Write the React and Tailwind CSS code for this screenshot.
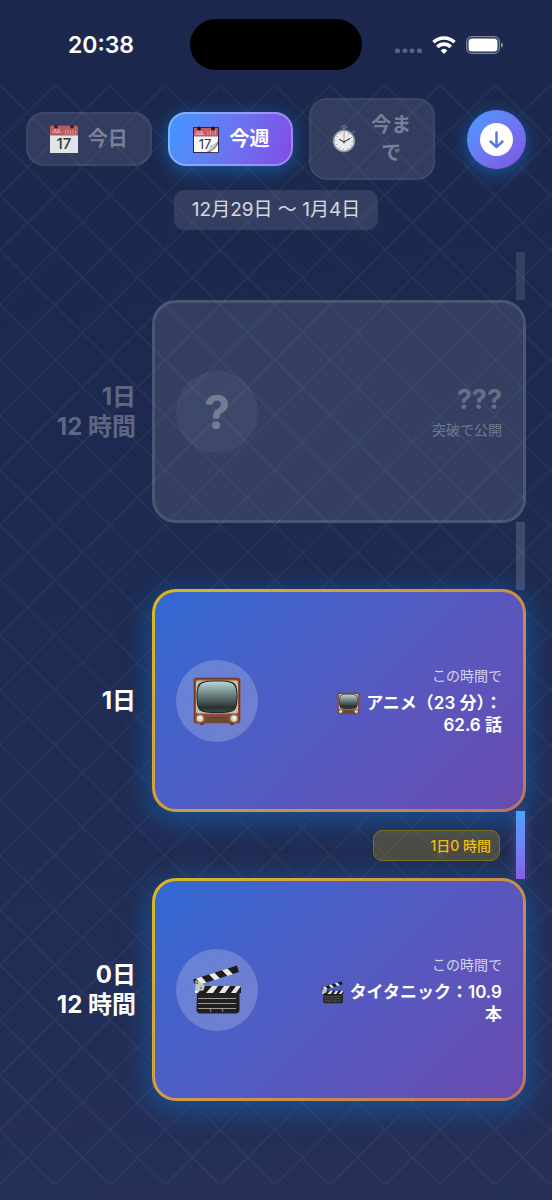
import { useState } from 'react'
import clsx from 'clsx'

const RANGES = [
  { id: 'today', label: '今日', Icon: CalendarIcon },
  { id: 'week', label: '今週', Icon: TearOffIcon },
  { id: 'all', label: '今まで', Icon: StopwatchIcon },
]

const MILESTONES = [
  { days: '1日', hours: '12 時間', locked: true },
  { days: '1日', title: 'アニメ（23 分）：\n62.6 話', Icon: TvIcon, reached: '1日0 時間' },
  { days: '0日', hours: '12 時間', title: 'タイタニック：10.9\n本', Icon: ClapperIcon },
]

/** Faint diamond lattice behind the whole screen. */
function Lattice() {
  return (
    <svg className="pointer-events-none absolute inset-x-0 top-[85px] -z-10 h-[calc(100%-101px)] w-full" aria-hidden="true">
      <defs>
        <pattern id="lattice" width="55" height="55" patternUnits="userSpaceOnUse">
          <path d="M-1 -1L56 56M56 -1L-1 56" stroke="#fff" strokeOpacity="0.05" strokeWidth="1.300" fill="none" />
        </pattern>
      </defs>
      <rect width="100%" height="100%" fill="url(#lattice)" />
    </svg>
  )
}

function CalendarIcon({ className }) {
  return (
    <svg viewBox="0 0 28 28" className={className} aria-hidden="true">
      <rect width="28" height="28" fill="#f7f7f7" />
      <rect width="28" height="10.500" fill="#c9605f" />
      <path d="M0 .5h28" stroke="#8c3f45" />
      <circle cx="6" cy="1.800" r="1.8" fill="#2b1c26" />
      <circle cx="22" cy="1.800" r="1.8" fill="#2b1c26" />
      <text x="2" y="8" fontSize="5" fontWeight="600" fill="#f4dcdc" fontFamily="Inter, sans-serif">JUL</text>
      <path d="M15.500 5.500v4M18 4.500v5M20.500 5.500v4M23 4.500v5M25.500 5.500v4" stroke="#e3a2a2" strokeWidth="1" />
      <text x="14" y="24" textAnchor="middle" fontSize="15" fontWeight="500" fill="#33363c" fontFamily="Inter, sans-serif">17</text>
    </svg>
  )
}

function TearOffIcon({ className }) {
  return (
    <svg viewBox="0 0 28 28" className={className} aria-hidden="true">
      <rect x="1" y="2" width="26" height="26" fill="#2e2b3a" />
      <rect x="2" y="3" width="24" height="24" fill="#f7f7f7" />
      <rect x="2" y="3" width="24" height="8.500" fill="#c45a62" />
      <circle cx="7" cy="3.500" r="2" fill="#1f1720" />
      <circle cx="21" cy="3.500" r="2" fill="#1f1720" />
      <text x="3" y="10" fontSize="5" fontWeight="600" fill="#f1d3d5" fontFamily="Inter, sans-serif">JUL</text>
      <path d="M16 6.500v3.500M18.500 5.500V10M21 6.500v3.500M23.500 5.500V10" stroke="#dc9a9f" strokeWidth="1" />
      <text x="13" y="24" textAnchor="middle" fontSize="13" fontWeight="400" fill="#33363c" fontFamily="Inter, sans-serif">17</text>
      <path d="M26 16c-2 3-5 4-8 5 .500 2.500-1 4.500-3 6l11 .500z" fill="#75767b" />
      <path d="M26 15.500c-2 3-5 4.500-8 5 .500 2-1 5-4 6.500 5-.500 10-4.500 12-11.500z" fill="#c9cacc" />
      <path d="M26 19c-2 4-5 6-8 8h8z" fill="#fff" />
    </svg>
  )
}

function StopwatchIcon({ className }) {
  return (
    <svg viewBox="0 0 28 28" className={className} aria-hidden="true">
      <rect x="12" y="0.500" width="4" height="5" rx="1" fill="#4c5a66" />
      <ellipse cx="14" cy="2" rx="3" ry="1.500" fill="none" stroke="#6b7883" strokeWidth="1" />
      <path d="M22.500 7.500l2.500-1.500" stroke="#4c6470" strokeWidth="3" />
      <circle cx="14" cy="16" r="11.300" fill="#6a7378" />
      <circle cx="14" cy="16" r="10.800" fill="none" stroke="#aab2b5" strokeWidth="0.800" />
      <circle cx="14" cy="16" r="9.900" fill="#fff" />
      <circle cx="14" cy="16" r="8.300" fill="none" stroke="#8d8f90" strokeWidth="1.400" strokeDasharray="0.700 3.646" />
      <path d="M14 17l-4.500-2.500M14 17l6-3.500" stroke="#4a4a4a" strokeWidth="1.100" strokeLinecap="round" />
      <path d="M14 19V7.500" stroke="#d08a78" strokeWidth="0.900" />
      <circle cx="14" cy="16.800" r="1" fill="#444" />
    </svg>
  )
}

function TvIcon({ className }) {
  return (
    <svg viewBox="0 0 50 50" className={className} aria-hidden="true">
      <defs>
        <linearGradient id="tv-screen" x1="0" y1="0" x2="0" y2="1">
          <stop offset="0" stopColor="#b9d8d8" />
          <stop offset="0.400" stopColor="#6f8585" />
          <stop offset="0.850" stopColor="#283131" />
          <stop offset="1" stopColor="#3d4747" />
        </linearGradient>
      </defs>
      <path d="M7 45h5v4H8zM38 45h5l-1 4h-4z" fill="#6a3424" />
      <rect x="1.500" y="1.500" width="47" height="46" rx="3" fill="#8f5039" />
      <rect x="2.500" y="2.500" width="45" height="44" rx="2.500" fill="none" stroke="#6f3828" />
      <rect x="4" y="4.500" width="42" height="33" rx="2" fill="#c8bfa8" />
      <rect x="3.500" y="38.500" width="43" height="8" rx="1" fill="#8a4a34" />
      <path d="M25 4.500c-9 0-15 .500-17.500 3S4.500 15 4.500 20.500s.500 11 3 13.500 8.500 3 17.500 3 15-.500 17.500-3 3-8 3-13.500-.500-10.500-3-13-8.500-3-17.500-3z" fill="#1f2626" />
      <path d="M25 5.500c-9 0-14 .500-16.500 3s-3 7-3 12 .500 10 3 12.500 7.500 3 16.500 3 14-.500 16.500-3 3-7.500 3-12.500-.500-9.500-3-12-7.500-3-16.500-3z" fill="url(#tv-screen)" />
      <path d="M6 14h38M5.500 17.500h39M5.500 21h39M5.500 24.500h39M6 28h38" stroke="#fff" strokeOpacity="0.040" />
      <path d="M16 41h18l3 5H13z" fill="#554234" />
      <path d="M15 43h20M14 45h22" stroke="#766352" strokeWidth="0.700" />
      <circle cx="8" cy="42.500" r="4" fill="#9b8d77" />
      <circle cx="8" cy="42.500" r="3" fill="#e0dac9" />
      <path d="M8 40v3" stroke="#fff" strokeWidth="1.200" />
      <circle cx="42" cy="42.500" r="4" fill="#9b8d77" />
      <circle cx="42" cy="42.500" r="3" fill="#e0dac9" />
      <path d="M42 40v3" stroke="#fff" strokeWidth="1.200" />
    </svg>
  )
}

function ClapperIcon({ className }) {
  return (
    <svg viewBox="0 0 50 50" className={className} aria-hidden="true">
      <path d="M5 27h42.500v17.500a4 4 0 01-4 4h-35a4 4 0 01-4-4z" fill="#202020" />
      <path d="M6 33.500h38M6 38.500h38M6 43.500h38" stroke="#a9a9a9" strokeWidth="0.900" />
      <path d="M18.500 44v3M30.500 44v3" stroke="#777" strokeWidth="1.300" />
      <path d="M3 21h46v7H3z" fill="#1d1d1d" />
      <path d="M3 28l0-3 3-4h5l-5 7zM14 28l6-7h6l-5 7zM27 28l5-7h6l-5 7zM39 28l5-7h5l-5 7z" fill="#e9e9e9" />
      <path d="M1 14.500L45 .5l2 6.500L3.500 21z" fill="#1d1d1d" />
      <path d="M4 13.600l5.500-1.800 5 5.800-5.500 1.700zM17 9.400l5.500-1.700 5.500 5.700-5.500 1.800zM30 5.300l5.500-1.800 5.500 5.800-5.500 1.700z" fill="#e9e9e9" />
      <path d="M3.500 15l9 5v2.500l-1 3-8.500.500z" fill="#c2c6c6" />
      <circle cx="5" cy="18" r="0.900" fill="#555" />
      <circle cx="9" cy="23" r="0.900" fill="#777" />
    </svg>
  )
}

function StatusBar() {
  return (
    <div className="grid grid-cols-[1fr_172px_1fr] items-center pt-[19px]">
      <p className="pl-3 text-center text-[23px] leading-7 font-semibold">20:38</p>
      <div className="h-[51px] rounded-[26px] bg-black" />
      <div className="flex items-center justify-center gap-[10px] pr-4">
        <svg viewBox="0 0 27 20" className="h-5 w-[27px]" fill="#59627e" aria-hidden="true">
          <rect x="0" y="13.500" width="5" height="4.500" rx="1.500" />
          <rect x="7.500" y="13.500" width="5" height="4.500" rx="2" />
          <rect x="14.500" y="13.500" width="5" height="4.500" rx="2" />
          <rect x="22" y="13.500" width="5" height="4.500" rx="1.500" />
        </svg>
        <svg viewBox="0 0 24 18" className="h-[18px] w-6" fill="none" stroke="#fff" strokeWidth="3.600" aria-hidden="true">
          <path d="M1.500 6.300a15 15 0 0121 0" />
          <path d="M5.300 11a9.200 9.200 0 0113.400 0" />
          <path d="M12 18l-3.300-3.600a4.800 4.800 0 016.600 0z" fill="#fff" stroke="none" />
        </svg>
        <svg viewBox="0 0 38 18" className="h-[18px] w-[38px]" aria-hidden="true">
          <rect x="0.700" y="0.700" width="32.600" height="16.600" rx="5" fill="none" stroke="#fff" strokeOpacity="0.450" strokeWidth="1.300" />
          <rect x="2.500" y="2.500" width="29" height="13" rx="3.500" fill="#fff" />
          <path d="M35 6.500c1.500.500 2 1.500 2 2.500s-.500 2-2 2.500z" fill="#fff" fillOpacity="0.500" />
        </svg>
      </div>
    </div>
  )
}

function MilestoneCard({ item }) {
  if (item.locked) {
    return (
      <article className="flex h-[223px] flex-1 items-center justify-between rounded-3xl border-[3px] border-white/20 bg-white/10 bg-clip-padding px-[21px]">
        <div className="grid size-[82px] place-items-center rounded-full bg-white/5 text-[46px] leading-none font-bold text-white/30">?</div>
        <div className="text-right">
          <p className="text-[27px] leading-9 font-bold text-white/25">???</p>
          <p className="text-[14px] leading-6 text-white/30">突破で公開</p>
        </div>
      </article>
    )
  }
  const { Icon } = item
  return (
    <article className="h-[223px] flex-1 rounded-3xl bg-linear-135 from-[#dab818] to-[#c0725c] p-[3px] shadow-[0_6px_26px_4px_rgba(18,100,180,0.6)]">
      <div className="flex h-full items-center justify-between rounded-[21px] bg-linear-135 from-[#2f69d3] to-[#684bb0] px-[21px]">
        <div className="grid size-[82px] place-items-center rounded-full bg-white/20">
          <Icon className="size-[50px]" />
        </div>
        <div className="pb-0.5 text-right">
          <p className="text-[14px] leading-6 text-white/75">この時間で</p>
          <p className="mt-1 text-[17px] leading-[22px] font-semibold whitespace-pre-line">
            <Icon className="-my-1 mr-[6px] inline-block size-[23px] align-middle" />
            {item.title}
          </p>
        </div>
      </div>
    </article>
  )
}

function Connector({ reached }) {
  return (
    <div className="flex h-[66px] items-center justify-end gap-4 pr-px">
      {reached && (
        <p className="w-[127px] rounded-[9px] border border-[#7c6f22] bg-[#fcc800]/20 px-2 py-1 text-right text-[14px] leading-[21px] font-medium text-[#f2bd0b]">
          {reached}
        </p>
      )}
      <div
        className={clsx(
          'z-10 h-[68px] w-[9px] shrink-0',
          reached ? 'bg-linear-to-b from-[#46a3ff] to-[#8560e6] shadow-[0_0_12px_rgba(150,130,220,0.35)]' : 'bg-white/15',
        )}
      />
    </div>
  )
}

export default function App() {
  const [range, setRange] = useState('week')

  return (
    <div className="relative isolate min-h-screen bg-linear-170 from-[#1b274c] via-[#1e2b52] to-[#263059] pb-[99px] font-['Inter','Noto_Sans_CJK_JP',sans-serif] text-white" lang="ja">
      <Lattice />
      <StatusBar />

      <header className="mt-7 flex items-center gap-8 px-[26px]">
        <nav className="flex flex-1 items-center gap-4">
          {RANGES.map(({ id, label, Icon }) => (
            <button
              key={id}
              type="button"
              aria-pressed={range === id}
              onClick={() => setRange(id)}
              className={clsx(
                'flex flex-1 items-center justify-center gap-[10px] rounded-[18px] border-2 px-[19px] py-[11px] text-[20px] leading-7 font-semibold',
                range === id
                  ? 'border-white/30 bg-linear-110 from-[#3a98ff] to-[#7f4be4] bg-origin-border shadow-[0_4px_18px_rgba(20,120,210,0.6)]'
                  : 'border-white/5 bg-white/10 text-white/35',
              )}
            >
              <Icon className={clsx('size-7 shrink-0', range !== id && 'opacity-90')} />
              <span>{label}</span>
            </button>
          ))}
        </nav>
        <button
          type="button"
          aria-label="一番下へ"
          className="grid size-[59px] shrink-0 place-items-center rounded-full bg-linear-135 from-[#3f9cff] to-[#8050e2] shadow-[0_4px_18px_rgba(20,120,210,0.6)]"
        >
          <svg viewBox="0 0 33 33" className="size-[33px]" aria-hidden="true">
            <circle cx="16.500" cy="16.500" r="16.500" fill="#fff" />
            <path d="M16.500 9.500v14.500M10.500 18.500l6 5.700 6-5.700" fill="none" stroke="#5a75e6" strokeWidth="2.500" strokeLinecap="round" strokeLinejoin="round" />
          </svg>
        </button>
      </header>

      <p className="mx-auto mt-[10px] w-fit rounded-[10px] bg-white/10 px-[18px] py-1.5 text-[19px] leading-7 text-white/80">12月29日 〜 1月4日</p>

      <main className="mt-[22px] px-[26px]">
        <div className="flex justify-end pr-px">
          <div className="h-12 w-[9px] bg-white/10" />
        </div>
        {MILESTONES.map((item, i) => (
          <div key={i}>
            <section className="flex items-center gap-4">
              <h2 className={clsx('w-[110px] shrink-0 text-right text-[24px] leading-[30px] font-bold', item.locked && 'text-white/30')}>
                {item.days}
                {item.hours && <span className="block">{item.hours}</span>}
              </h2>
              <MilestoneCard item={item} />
            </section>
            {i < MILESTONES.length - 1 && <Connector reached={item.reached} />}
          </div>
        ))}
      </main>
    </div>
  )
}
